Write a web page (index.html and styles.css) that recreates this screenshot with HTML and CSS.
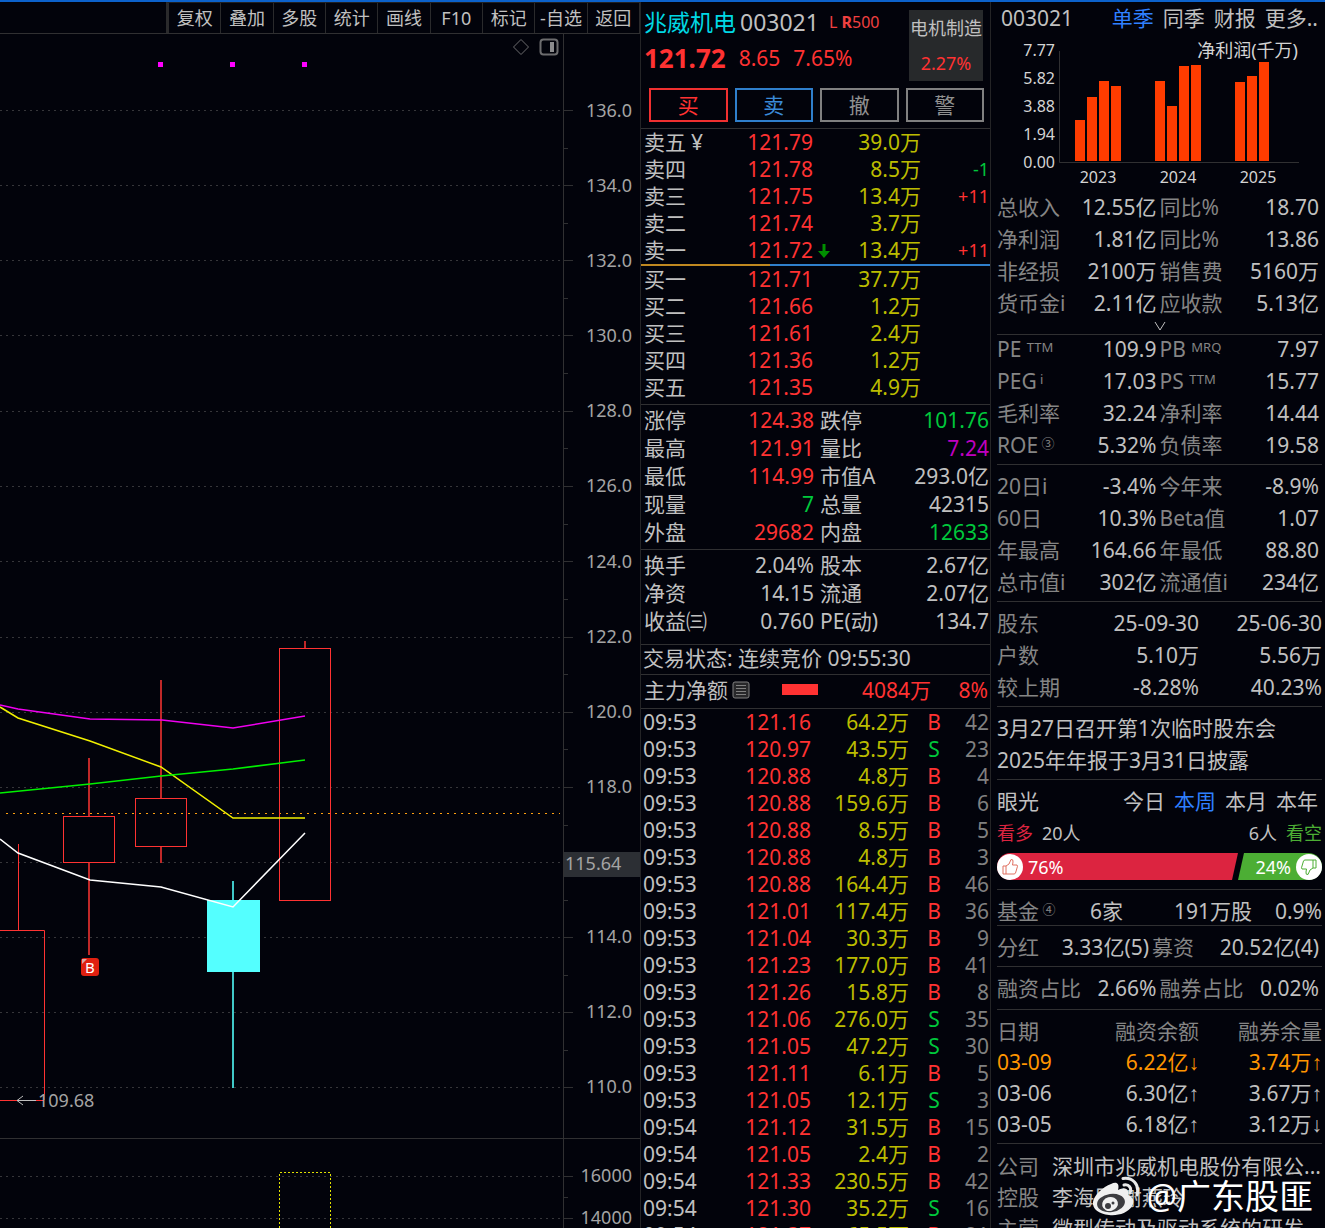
FILE: index.html
```html
<!DOCTYPE html>
<html lang="zh-CN">
<head>
  <meta charset="UTF-8" />
  <meta name="viewport" content="width=device-width, initial-scale=1" />
  <title>兆威机电 003021</title>
  <link rel="stylesheet" href="styles.css">
</head>
<body>

  <div class="app">

    <!-- K line -->
    <main class="chart">
      <nav class="toolbar">
        <button>复权</button>
        <button>叠加</button>
        <button>多股</button>
        <button>统计</button>
        <button>画线</button>
        <button>F10</button>
        <button>标记</button>
        <button>-自选</button>
        <button>返回</button>
      </nav>
      <div class="plot">
        <svg viewBox="0 34 640 1194" preserveAspectRatio="xMaxYMin meet">
          <g class="grid">
            <path d="M0 110.5H560M0 185.5H560M0 260.5H560M0 335.5H560M0 411.5H560M0 486.5H560M0 561.5H560M0 637.5H560M0 712.5H560M0 787.5H560M0 862.5H560M0 937.5H560M0 1012.5H560M0 1087.5H560M0 1176.5H560M0 1218.5H560" />
          </g>
          <path class="axis" d="M563.5 34V1228M0 1138.5H640" />
          <path class="axis" d="M564 110.5h9M564 185.5h9M564 260.5h9M564 335.5h9M564 411.5h9M564 486.5h9M564 561.5h9M564 637.5h9M564 712.5h9M564 787.5h9M564 937.5h9M564 1012.5h9M564 1087.5h9M564 1176.5h9M564 1218.5h9" />
          <path class="axis" d="M564 148.5h4M564 223.5h4M564 298.5h4M564 373.5h4M564 448.5h4M564 524.5h4M564 599.5h4M564 674.5h4M564 749.5h4M564 825.5h4M564 900.5h4M564 975.5h4M564 1050.5h4M564 1197.5h4" />

          <g class="scale">
            <text x="632" y="117">136.0</text>
            <text x="632" y="192">134.0</text>
            <text x="632" y="267">132.0</text>
            <text x="632" y="342">130.0</text>
            <text x="632" y="417">128.0</text>
            <text x="632" y="492">126.0</text>
            <text x="632" y="568">124.0</text>
            <text x="632" y="643">122.0</text>
            <text x="632" y="718">120.0</text>
            <text x="632" y="793">118.0</text>
            <text x="632" y="943">114.0</text>
            <text x="632" y="1018">112.0</text>
            <text x="632" y="1093">110.0</text>
            <text x="632" y="1182">16000</text>
            <text x="632" y="1224">14000</text>
          </g>
          <rect class="cursor-box" x="564" y="852" width="76" height="25" />
          <text class="cursor-price" x="565" y="870">115.64</text>

          <g class="signal">
            <rect x="158" y="62" width="5" height="5" />
            <rect x="230" y="62" width="5" height="5" />
            <rect x="302" y="62" width="5" height="5" />
          </g>

          <path class="base-line" d="M6 813.5H560" />

          <!-- candles -->
          <g class="up">
            <path d="M18.5 844V930M0 930.5H44.5V1100M0 1100.5H44" />
            <path class="wick" d="M89 758V816M89 863V955" />
            <rect x="63.5" y="816.5" width="51" height="46" />
            <path class="wick" d="M161 680V798M161 847V863" />
            <rect x="135.5" y="798.5" width="51" height="48" />
            <path class="wick" d="M305 641V648" />
            <rect x="279.5" y="648.5" width="51" height="252" />
          </g>
          <g class="down">
            <path d="M233 881V1088" />
            <rect x="207" y="900" width="53" height="72" />
          </g>

          <!-- moving averages -->
          <polyline class="ma ma-purple" points="0,705 18,709 90,719 162,720 233,728 305,716" />
          <polyline class="ma ma-yellow" points="0,707 18,718 90,741 161,767 233,818 305,818" />
          <polyline class="ma ma-green" points="0,793 90,784 161,776 233,769 305,760" />
          <polyline class="ma ma-white" points="0,839 18,853 90,880 161,887 233,907 305,833" />

          <rect class="flag" x="81" y="958" width="18" height="18" rx="3" />
          <path class="flag-corner" d="M82 964V959H87" />
          <text class="flag-text" x="90" y="973">B</text>

          <path class="arrow" d="M17 1100.5H36M23 1096L17 1100.5L23 1105" />
          <text class="low-price" x="38" y="1107">109.68</text>

          <path class="volume" d="M279.5 1228V1172.5H330.5V1228" />
        </svg>
        <div class="plot-tools">
          <button aria-label="标记点">
            <svg width="18" height="18" viewBox="0 0 18 18"><path d="M9 1.5L16.5 9L9 16.5L1.5 9Z" /></svg>
          </button>
          <button aria-label="侧栏">
            <svg width="20" height="18" viewBox="0 0 20 18"><rect x="1.5" y="1.5" width="17" height="15" rx="3" stroke-width="2" /><rect class="solid" x="11" y="4" width="4" height="10" /></svg>
          </button>
        </div>
      </div>
    </main>

    <!-- quote -->
    <section class="quote">
      <header class="quote-head">
        <div class="quote-main">
          <div class="title">
            <span class="name">兆威机电</span>
            <span class="code">003021</span>
            <span class="tags">L <b>R</b>500</span>
          </div>
          <div class="price">
            <strong>121.72</strong>
            <span>8.65</span>
            <span>7.65%</span>
          </div>
        </div>
        <div class="industry">
          <span>电机制造</span>
          <span class="red">2.27%</span>
        </div>
      </header>
      <div class="orders">
        <button class="buy">买</button>
        <button class="sell">卖</button>
        <button>撤</button>
        <button>警</button>
      </div>

      <table class="book">
        <tr><th>卖五<span class="yen">¥</span></th><td class="red">121.79</td><td class="yellow">39.0万</td><td></td></tr>
        <tr><th>卖四</th><td class="red">121.78</td><td class="yellow">8.5万</td><td class="green">-1</td></tr>
        <tr><th>卖三</th><td class="red">121.75</td><td class="yellow">13.4万</td><td class="red">+11</td></tr>
        <tr><th>卖二</th><td class="red">121.74</td><td class="yellow">3.7万</td><td></td></tr>
        <tr><th>卖一</th><td class="red last">121.72<svg class="last-arrow" width="12" height="14" viewBox="0 0 12 14"><path d="M4.5 0h3v7H12L6 14L0 7H4.5Z" /></svg></td><td class="yellow">13.4万</td><td class="red">+11</td></tr>
      </table>
      <div class="ratio"><i style="width: 37%"></i></div>
      <table class="book">
        <tr><th>买一</th><td class="red">121.71</td><td class="yellow">37.7万</td><td></td></tr>
        <tr><th>买二</th><td class="red">121.66</td><td class="yellow">1.2万</td><td></td></tr>
        <tr><th>买三</th><td class="red">121.61</td><td class="yellow">2.4万</td><td></td></tr>
        <tr><th>买四</th><td class="red">121.36</td><td class="yellow">1.2万</td><td></td></tr>
        <tr><th>买五</th><td class="red">121.35</td><td class="yellow">4.9万</td><td></td></tr>
      </table>

      <div class="info info-day">
        <div><span>涨停</span><span class="red">124.38</span></div>
        <div><span>跌停</span><span class="green">101.76</span></div>
        <div><span>最高</span><span class="red">121.91</span></div>
        <div><span>量比</span><span class="purple">7.24</span></div>
        <div><span>最低</span><span class="red">114.99</span></div>
        <div><span>市值A</span><span>293.0亿</span></div>
        <div><span>现量</span><span class="green">7</span></div>
        <div><span>总量</span><span>42315</span></div>
        <div><span>外盘</span><span class="red">29682</span></div>
        <div><span>内盘</span><span class="green">12633</span></div>
      </div>
      <div class="info info-base">
        <div><span>换手</span><span>2.04%</span></div>
        <div><span>股本</span><span>2.67亿</span></div>
        <div><span>净资</span><span>14.15</span></div>
        <div><span>流通</span><span>2.07亿</span></div>
        <div><span>收益㈢</span><span>0.760</span></div>
        <div><span>PE(动)</span><span>134.7</span></div>
      </div>
      <div class="status">交易状态: 连续竞价 09:55:30</div>
      <div class="flow">
        <span>主力净额</span>
        <svg class="flow-icon" width="18" height="18" viewBox="0 0 18 18"><rect x="1" y="1" width="16" height="16" rx="2" /><path d="M4 4.5h10M4 7.5h10M4 10.5h10M4 13.5h10" /></svg>
        <i class="flow-bar"></i>
        <span class="flow-sum red">4084万</span>
        <span class="flow-pct red">8%</span>
      </div>

      <table class="ticks">
        <tr><td>09:53</td><td>121.16</td><td>64.2万</td><td class="red">B</td><td>42</td></tr>
        <tr><td>09:53</td><td>120.97</td><td>43.5万</td><td class="green">S</td><td>23</td></tr>
        <tr><td>09:53</td><td>120.88</td><td>4.8万</td><td class="red">B</td><td>4</td></tr>
        <tr><td>09:53</td><td>120.88</td><td>159.6万</td><td class="red">B</td><td>6</td></tr>
        <tr><td>09:53</td><td>120.88</td><td>8.5万</td><td class="red">B</td><td>5</td></tr>
        <tr><td>09:53</td><td>120.88</td><td>4.8万</td><td class="red">B</td><td>3</td></tr>
        <tr><td>09:53</td><td>120.88</td><td>164.4万</td><td class="red">B</td><td>46</td></tr>
        <tr><td>09:53</td><td>121.01</td><td>117.4万</td><td class="red">B</td><td>36</td></tr>
        <tr><td>09:53</td><td>121.04</td><td>30.3万</td><td class="red">B</td><td>9</td></tr>
        <tr><td>09:53</td><td>121.23</td><td>177.0万</td><td class="red">B</td><td>41</td></tr>
        <tr><td>09:53</td><td>121.26</td><td>15.8万</td><td class="red">B</td><td>8</td></tr>
        <tr><td>09:53</td><td>121.06</td><td>276.0万</td><td class="green">S</td><td>35</td></tr>
        <tr><td>09:53</td><td>121.05</td><td>47.2万</td><td class="green">S</td><td>30</td></tr>
        <tr><td>09:53</td><td>121.11</td><td>6.1万</td><td class="red">B</td><td>5</td></tr>
        <tr><td>09:53</td><td>121.05</td><td>12.1万</td><td class="green">S</td><td>3</td></tr>
        <tr><td>09:54</td><td>121.12</td><td>31.5万</td><td class="red">B</td><td>15</td></tr>
        <tr><td>09:54</td><td>121.05</td><td>2.4万</td><td class="red">B</td><td>2</td></tr>
        <tr><td>09:54</td><td>121.33</td><td>230.5万</td><td class="red">B</td><td>42</td></tr>
        <tr><td>09:54</td><td>121.30</td><td>35.2万</td><td class="green">S</td><td>16</td></tr>
        <tr><td>09:54</td><td>121.37</td><td>65.5万</td><td class="red">B</td><td>21</td></tr>
      </table>
    </section>

    <!-- fundamentals -->
    <aside class="finance">
      <section class="block profit">
        <div class="finance-head">
          <span>003021</span>
          <nav class="tabs">
            <a href="#" class="active">单季</a>
            <a href="#">同季</a>
            <a href="#">财报</a>
            <a href="#">更多..</a>
          </nav>
        </div>
        <svg class="bars" viewBox="997 34 325 156">
          <path class="axis" d="M1059.5 51V162.5H1299" />
          <g class="bar-scale">
            <text x="1055" y="56">7.77</text>
            <text x="1055" y="84">5.82</text>
            <text x="1055" y="112">3.88</text>
            <text x="1055" y="140">1.94</text>
            <text x="1055" y="168">0.00</text>
          </g>
          <g class="bar-fill">
            <rect x="1075" y="120" width="10" height="41" />
            <rect x="1087" y="97" width="10" height="64" />
            <rect x="1099" y="81" width="10" height="80" />
            <rect x="1111" y="86" width="10" height="75" />
            <rect x="1155" y="81" width="10" height="80" />
            <rect x="1167" y="106" width="10" height="55" />
            <rect x="1179" y="66" width="10" height="95" />
            <rect x="1191" y="65" width="10" height="96" />
            <rect x="1235" y="82" width="10" height="79" />
            <rect x="1247" y="76" width="10" height="85" />
            <rect x="1259" y="62" width="10" height="99" />
          </g>
          <g class="bar-year">
            <text x="1098" y="183">2023</text>
            <text x="1178" y="183">2024</text>
            <text x="1258" y="183">2025</text>
          </g>
          <text class="bar-title" x="1298" y="57">净利润(千万)</text>
        </svg>
        <div class="stats">
          <div><span>总收入</span><span>12.55亿</span></div>
          <div><span>同比%</span><span>18.70</span></div>
          <div><span>净利润</span><span>1.81亿</span></div>
          <div><span>同比%</span><span>13.86</span></div>
          <div><span>非经损</span><span>2100万</span></div>
          <div><span>销售费</span><span>5160万</span></div>
          <div><span>货币金i</span><span>2.11亿</span></div>
          <div><span>应收款</span><span>5.13亿</span></div>
        </div>
        <button class="more" aria-label="展开">
          <svg width="12" height="10" viewBox="0 0 12 10"><path d="M1 1L6 9L11 1" /></svg>
        </button>
      </section>

      <section class="block valuation">
        <div class="stats">
          <div><span>PE <sup>TTM</sup></span><span>109.9</span></div>
          <div><span>PB <sup>MRQ</sup></span><span>7.97</span></div>
          <div><span>PEG<sup> i</sup></span><span>17.03</span></div>
          <div><span>PS <sup>TTM</sup></span><span>15.77</span></div>
          <div><span>毛利率</span><span>32.24</span></div>
          <div><span>净利率</span><span>14.44</span></div>
          <div><span>ROE<sup> ③</sup></span><span>5.32%</span></div>
          <div><span>负债率</span><span>19.58</span></div>
        </div>
      </section>

      <section class="block">
        <div class="stats">
          <div><span>20日i</span><span>-3.4%</span></div>
          <div><span>今年来</span><span>-8.9%</span></div>
          <div><span>60日</span><span>10.3%</span></div>
          <div><span>Beta值</span><span>1.07</span></div>
          <div><span>年最高</span><span>164.66</span></div>
          <div><span>年最低</span><span>88.80</span></div>
          <div><span>总市值i</span><span>302亿</span></div>
          <div><span>流通值i</span><span>234亿</span></div>
        </div>
      </section>

      <section class="block">
        <table class="holders">
          <tr><th>股东</th><td>25-09-30</td><td>25-06-30</td></tr>
          <tr><th>户数</th><td>5.10万</td><td>5.56万</td></tr>
          <tr><th>较上期</th><td>-8.28%</td><td>40.23%</td></tr>
        </table>
      </section>

      <section class="block news">
        <p>3月27日召开第1次临时股东会</p>
        <p>2025年年报于3月31日披露</p>
      </section>

      <section class="block mood">
        <div class="mood-head">
          <span>眼光</span>
          <nav class="tabs">
            <a href="#">今日</a>
            <a href="#" class="active">本周</a>
            <a href="#">本月</a>
            <a href="#">本年</a>
          </nav>
        </div>
        <div class="mood-count">
          <span><b class="long">看多</b>20人</span>
          <span>6人<b class="short">看空</b></span>
        </div>
        <div class="mood-bar">
          <div class="mood-long">
            <svg width="26" height="26" viewBox="0 0 26 26"><circle cx="13" cy="13" r="13" /><path d="M6 12h3v8H6ZM9 12L12 10L14 5.500Q16.500 5 16 8L15.500 11H20Q21 12 20 14L18.500 19Q18 20 17 20H9" /></svg>
            <span>76%</span>
          </div>
          <div class="mood-short">
            <span>24%</span>
            <svg width="26" height="26" viewBox="0 0 26 26"><circle cx="13" cy="13" r="13" /><path d="M20 14h-3V6h3ZM17 14L14 16L12 20.500Q9.500 21 10 18L10.500 15H6Q5 14 6 12L7.500 7Q8 6 9 6H17" /></svg>
          </div>
        </div>
      </section>

      <section class="block fund">
        <span class="dim">基金<sup> ④</sup></span>
        <span>6家</span>
        <span>191万股</span>
        <span>0.9%</span>
      </section>

      <section class="block">
        <div class="stats dividend">
          <div><span>分红</span><span>3.33亿(5)</span></div>
          <div><span>募资</span><span>20.52亿(4)</span></div>
        </div>
      </section>

      <section class="block loan">
        <div class="stats">
          <div><span>融资占比</span><span>2.66%</span></div>
          <div><span>融券占比</span><span>0.02%</span></div>
        </div>
      </section>

      <section class="block margin">
        <table>
          <tr><th>日期</th><th>融资余额</th><th>融券余量</th></tr>
          <tr class="orange"><td>03-09</td><td>6.22亿<i>↓</i></td><td>3.74万<i>↑</i></td></tr>
          <tr><td>03-06</td><td>6.30亿<i>↑</i></td><td>3.67万<i>↑</i></td></tr>
          <tr><td>03-05</td><td>6.18亿<i>↑</i></td><td>3.12万<i>↓</i></td></tr>
        </table>
      </section>

      <section class="block company">
        <div><span class="dim">公司</span><span>深圳市兆威机电股份有限公...</span></div>
        <div><span class="dim">控股</span><span>李海周,谢燕玲</span></div>
        <div><span class="dim">主营</span><span>微型传动及驱动系统的研发</span></div>
      </section>
    </aside>

    <div class="watermark">
      <svg width="48" height="40" viewBox="0 0 48 40">
        <path class="body" d="M19 8C24 5 28 7 26 14C33 11 38 13 36 19C41 21 43 25 40 30C36 37 26 40 17 39C7 38 0 33 1 26C2 19 11 11 19 8Z" />
        <ellipse class="eye" cx="19" cy="27" rx="14" ry="9" transform="rotate(-8 19 27)" />
        <ellipse class="body" cx="18" cy="28" rx="8" ry="7" transform="rotate(-15 18 28)" />
        <circle class="eye" cx="16" cy="30" r="3" />
        <circle class="eye" cx="21" cy="27" r="1.500" />
        <path class="wave" d="M32 9C37 8 40 12 38 17M31 2.500C40 1 48 8 45 19" />
      </svg>
      <span>@广东股匪</span>
    </div>
  </div>

</body>
</html>
```
FILE: styles.css
```css
* {
  box-sizing: border-box;
}
body {
  margin: 0;
  background: #02030b;
  color: #c0c0c0;
  font-family: "Noto Sans", "Noto Sans CJK SC", sans-serif;
  font-size: 21px;
  line-height: 28px;
}
button {
  background: none;
  border: none;
  padding: 0;
  color: inherit;
  font: inherit;
  cursor: pointer;
}
table {
  width: 100%;
  border-collapse: collapse;
  table-layout: fixed;
}
th, td {
  padding: 0;
  font-weight: normal;
  text-align: right;
  white-space: nowrap;
}
th:first-child, td:first-child {
  text-align: left;
}
p {
  margin: 0;
}
a {
  color: inherit;
  text-decoration: none;
}
sup {
  font-size: 13px;
  line-height: 13px;
  vertical-align: 5px;
  white-space: pre;
}
.red { color: #ff3232; }
.green { color: #00c83c; }
.yellow { color: #bcbc00; }
.purple { color: #c000c0; }
.orange { color: #ff9500; }
.dim { color: #858585; }

.app {
  position: relative;
  display: grid;
  grid-template-columns: minmax(0, 1fr) 351px 334px;
  height: 100vh;
  overflow: hidden;
  border-top: 2px solid #0c62cc;
}

/* chart */
.chart {
  display: flex;
  flex-direction: column;
  min-width: 0;
  min-height: 0;
}
.toolbar {
  display: grid;
  grid-template-columns: repeat(9, 1fr);
  align-self: flex-end;
  width: 474px;
  height: 31px;
  border-left: 3px solid #2a2a2c;
  border-top: 1px solid #202022;
  font-size: 18px;
}
.toolbar button {
  border-right: 1px solid #2a2a2c;
  line-height: 26px;
  white-space: nowrap;
}
.toolbar button:hover {
  color: #fff;
}
.plot {
  position: relative;
  flex: 1;
  min-height: 0;
  border-top: 1px solid #303032;
}
.plot > svg {
  display: block;
  width: 100%;
}
.plot-tools {
  position: absolute;
  top: 4px;
  right: 81px;
  display: flex;
  gap: 9px;
}
.plot-tools button {
  display: flex;
}
.plot-tools svg {
  fill: none;
  stroke: #6c6c6e;
}
.plot-tools .solid {
  fill: #8c8c8e;
  stroke: none;
}
.grid path {
  stroke: #36363a;
  stroke-dasharray: 2 4;
}
.axis {
  fill: none;
  stroke: #303032;
}
.scale text, .cursor-price, .low-price {
  fill: #a4a4a4;
  font-size: 18px;
}
.scale text {
  text-anchor: end;
}
.cursor-box {
  fill: #2c2f34;
}
.signal {
  fill: #f0f;
}
.base-line {
  stroke: #ffa010;
  stroke-dasharray: 2 5;
}
.up {
  fill: none;
  stroke: #ff3232;
}
.up .wick {
  stroke: #c02828;
  stroke-width: 2;
}
.down {
  fill: #54ffff;
  stroke: none;
}
.down path {
  stroke: #40c8c8;
  stroke-width: 2;
}
.ma {
  fill: none;
  stroke-width: 1.5;
}
.ma-purple { stroke: #f000f0; }
.ma-yellow { stroke: #f0f000; }
.ma-green { stroke: #00f000; }
.ma-white { stroke: #fff; }
.flag {
  fill: #e02010;
}
.flag-corner {
  fill: #d8a8a8;
}
.flag-text {
  fill: #fff;
  font-size: 15px;
  text-anchor: middle;
}
.arrow {
  fill: none;
  stroke: #c0c0c0;
}
.volume {
  fill: none;
  stroke: #e0e000;
  stroke-dasharray: 2 2;
}

/* quote */
.quote {
  min-height: 0;
  overflow: hidden;
  border-left: 1px solid #242426;
  border-right: 1px solid #242426;
}
.quote-head {
  display: flex;
  justify-content: space-between;
  padding: 8px 7px 0 3px;
}
.title {
  display: flex;
  align-items: center;
  height: 24px;
  gap: 4px;
  white-space: nowrap;
}
.name {
  color: #00d8e4;
  font-size: 23px;
}
.code {
  font-size: 23px;
}
.tags {
  margin-left: 6px;
  color: #f04040;
  font-size: 16px;
}
.price {
  display: flex;
  align-items: center;
  height: 48px;
  gap: 13px;
  color: #ff3232;
}
.price strong {
  font-size: 26px;
}
.industry {
  display: flex;
  flex-direction: column;
  justify-content: space-around;
  align-items: center;
  width: 74px;
  height: 71px;
  background: #27292b;
  font-size: 18px;
  white-space: nowrap;
}
.orders {
  display: grid;
  grid-template-columns: repeat(4, 1fr);
  gap: 7px;
  padding: 6px 6px 6px 8px;
}
.orders button {
  height: 34px;
  border: 2px solid #808080;
  color: #909090;
  line-height: 26px;
}
.orders .buy {
  border-color: #f03030;
  color: #ff3232;
}
.orders .sell {
  border-color: #2f7fcc;
  color: #3a8ad8;
}
.book {
  line-height: 27px;
}
.orders + .book {
  border-top: 1px solid #303032;
}
.book th {
  width: 80px;
  padding-left: 3px;
}
.book td:nth-child(2) {
  width: 92px;
}
.book td:nth-child(3) {
  width: 108px;
}
.book td:nth-child(4) {
  padding-right: 1px;
  font-size: 18px;
}
.yen {
  margin-left: 5px;
}
.last {
  position: relative;
}
.last-arrow {
  position: absolute;
  top: 7px;
  left: 97px;
  fill: #009000;
}
.ratio {
  display: flex;
  height: 2px;
  background: #2f7fcc;
}
.ratio i {
  background: #c08820;
}
.info {
  display: grid;
  grid-template-columns: 170px 1fr;
  column-gap: 6px;
  padding: 1px 1px 3px 3px;
  border-top: 1px solid #303032;
}
.info div {
  display: flex;
  justify-content: space-between;
  white-space: nowrap;
}
.info-day {
  margin-top: 3px;
}
.info-base {
  padding-bottom: 9px;
}
.status {
  height: 30px;
  padding: 0 2px;
  border-top: 1px solid #303032;
  line-height: 26px;
}
.flow {
  display: flex;
  align-items: center;
  height: 34px;
  padding: 0 2px 4px 3px;
  border-top: 1px solid #303032;
}
.flow-icon {
  margin-left: 4px;
  fill: #28282a;
  stroke: #808080;
}
.flow-bar {
  width: 36px;
  height: 11px;
  margin-left: 32px;
  background: #ff3232;
}
.flow-sum {
  flex: 1;
  text-align: right;
}
.flow-pct {
  width: 57px;
  text-align: right;
}
.ticks {
  border-top: 1px solid #303032;
  line-height: 27px;
}
.ticks td:nth-child(1) {
  width: 80px;
  padding-left: 2px;
}
.ticks td:nth-child(2) {
  width: 90px;
  color: #ff3232;
}
.ticks td:nth-child(3) {
  width: 98px;
  color: #bcbc00;
}
.ticks td:nth-child(4) {
  width: 50px;
  text-align: center;
}
.ticks td:nth-child(5) {
  padding-right: 1px;
  color: #808080;
}

/* fundamentals */
.finance {
  min-height: 0;
  overflow: hidden;
  padding: 0 3px 0 6px;
}
.block {
  padding: 7px 0 5px;
  border-bottom: 1px solid #303032;
}
.finance-head, .mood-head {
  display: flex;
  justify-content: space-between;
  padding-right: 4px;
}
.finance-head {
  height: 32px;
  padding-left: 4px;
  line-height: 32px;
}
.tabs {
  display: flex;
  gap: 9px;
}
.tabs .active {
  color: #2f80ff;
}
.profit {
  padding: 0;
}
.bars {
  display: block;
  width: 100%;
  margin-bottom: 3px;
}
.bars text {
  fill: #d4d4d4;
  font-size: 16px;
}
.bar-scale {
  text-anchor: end;
}
.bar-year {
  text-anchor: middle;
}
.bars .bar-title {
  font-size: 18px;
  text-anchor: end;
}
.bar-fill {
  fill: #ff3c00;
}
.stats {
  display: grid;
  grid-template-columns: 1fr 1fr;
  gap: 4px 3px;
  padding-right: 3px;
}
.stats div {
  display: flex;
  justify-content: space-between;
  white-space: nowrap;
}
.stats span:first-child {
  color: #858585;
}
.more {
  display: flex;
  justify-content: center;
  align-items: center;
  width: 100%;
  height: 17px;
}
.more svg {
  fill: none;
  stroke: #c0c0c0;
}
.valuation {
  padding-top: 0;
}
.holders tr + tr td, .holders tr + tr th {
  padding-top: 4px;
}
.holders th, .margin th:first-child {
  width: 79px;
  color: #858585;
}
.holders td:nth-child(2), .margin th:nth-child(2) {
  width: 123px;
}
.news p + p {
  margin-top: 4px;
}
.mood {
  padding-bottom: 9px;
}
.mood-count {
  display: flex;
  justify-content: space-between;
  margin: 4px 0 6px;
  font-size: 18px;
}
.mood-count b {
  font-weight: normal;
}
.mood-count .long {
  margin-right: 9px;
  color: #dc2440;
}
.mood-count .short {
  margin-left: 9px;
  color: #4cae34;
}
.mood-bar {
  display: flex;
  height: 27px;
  color: #fff;
  font-size: 18px;
}
.mood-long, .mood-short {
  display: flex;
  align-items: center;
  gap: 5px;
}
.mood-long {
  flex: 1;
  background: #dc2440;
  border-radius: 14px 0 0 14px;
  clip-path: polygon(0 0, 100% 0, calc(100% - 6px) 100%, 0 100%);
}
.mood-short {
  justify-content: flex-end;
  width: 84px;
  background: #4cae34;
  border-radius: 0 14px 14px 0;
  clip-path: polygon(6px 0, 100% 0, 100% 100%, 0 100%);
}
.mood-bar circle {
  fill: #fff;
}
.mood-bar path {
  fill: none;
  stroke: #e07060;
}
.mood-short path {
  stroke: #4cae34;
}
.fund {
  display: grid;
  grid-template-columns: 60px 66px 129px 1fr;
  padding-bottom: 0;
  text-align: right;
  white-space: nowrap;
}
.fund .dim {
  text-align: left;
}
.dividend {
  grid-template-columns: 152px 1fr;
}
.loan {
  padding-bottom: 7px;
}
.margin {
  padding: 6px 0 3px;
}
.margin th {
  color: #858585;
}
.margin th, .margin td {
  line-height: 31px;
}
.margin i {
  font-family: "Liberation Sans", sans-serif;
  font-style: normal;
  line-height: 20px;
}
.company {
  line-height: 31px;
}
.company div {
  display: flex;
  gap: 13px;
  white-space: nowrap;
}

.watermark {
  position: absolute;
  right: 12px;
  bottom: 8px;
  display: flex;
  align-items: center;
  gap: 6px;
  color: #fff;
  font-size: 34px;
  line-height: 48px;
}
.watermark .body {
  fill: #f0f0f0;
}
.watermark .eye {
  fill: #3c3c40;
}
.watermark .wave {
  fill: none;
  stroke: #e8e8e8;
  stroke-width: 3;
  stroke-linecap: round;
}
```
